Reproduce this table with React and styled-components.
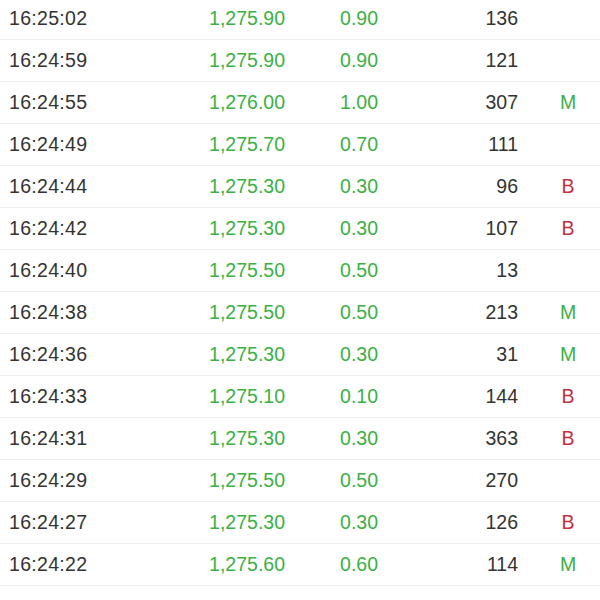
import React from "react";
import styled, { createGlobalStyle } from "styled-components";

const GlobalStyle = createGlobalStyle`
  html, body {
    margin: 0;
    padding: 0;
    background: #ffffff;
    overflow: hidden;
  }
  body {
    font-family: "Liberation Sans", Arial, sans-serif;
  }
`;

const List = styled.div`
  width: 600px;
  height: 600px;
  overflow: hidden;
  margin-top: -2px;
`;

const Row = styled.div`
  display: grid;
  grid-template-columns: 95px 190px 93px 140px 100px;
  align-items: center;
  height: 41px;
  border-bottom: 1px solid #efefef;
  font-size: 19.5px;
  color: #333333;
`;

const Time = styled.div`
  padding-left: 9px;
  color: #333333;
  letter-spacing: 0.3px;
`;

const Num = styled.div`
  text-align: right;
  color: ${(p) => (p.$green ? "#3cb043" : "#333333")};
`;

const Flag = styled.div`
  text-align: center;
  color: ${(p) => (p.$kind === "B" ? "#c0323c" : "#3cb043")};
`;

const rows = [
  ["16:25:02", "1,275.90", "0.90", "136", ""],
  ["16:24:59", "1,275.90", "0.90", "121", ""],
  ["16:24:55", "1,276.00", "1.00", "307", "M"],
  ["16:24:49", "1,275.70", "0.70", "111", ""],
  ["16:24:44", "1,275.30", "0.30", "96", "B"],
  ["16:24:42", "1,275.30", "0.30", "107", "B"],
  ["16:24:40", "1,275.50", "0.50", "13", ""],
  ["16:24:38", "1,275.50", "0.50", "213", "M"],
  ["16:24:36", "1,275.30", "0.30", "31", "M"],
  ["16:24:33", "1,275.10", "0.10", "144", "B"],
  ["16:24:31", "1,275.30", "0.30", "363", "B"],
  ["16:24:29", "1,275.50", "0.50", "270", ""],
  ["16:24:27", "1,275.30", "0.30", "126", "B"],
  ["16:24:22", "1,275.60", "0.60", "114", "M"],
  ["16:24:20", "1,275.30", "0.30", "66", "B"],
];

export default function App() {
  return (
    <>
      <GlobalStyle />
      <List>
        {rows.map((r, i) => (
          <Row key={i}>
            <Time>{r[0]}</Time>
            <Num $green>{r[1]}</Num>
            <Num $green>{r[2]}</Num>
            <Num>{r[3]}</Num>
            <Flag $kind={r[4]}>{r[4]}</Flag>
          </Row>
        ))}
      </List>
    </>
  );
}
